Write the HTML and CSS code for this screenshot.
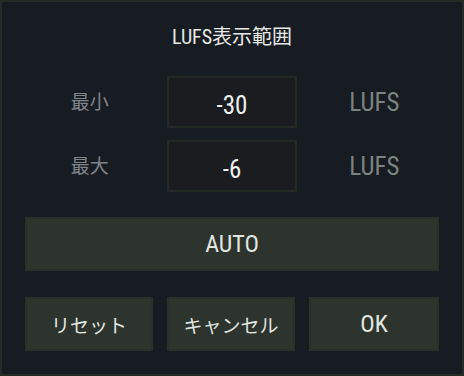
FILE: index.html
```html
<!DOCTYPE html>
<html lang="ja">
<head>
    <meta charset="UTF-8">
    <title>LUFS表示範囲</title>
    <link rel="stylesheet" href="styles.css">
</head>
<body>
    <div class="dialog">
        <div class="title">LUFS表示範囲</div>

        <div class="range-grid">
            <div class="label">最小</div>
            <div class="value-box">-30</div>
            <div class="unit">LUFS</div>

            <div class="label">最大</div>
            <div class="value-box">-6</div>
            <div class="unit">LUFS</div>
        </div>

        <button class="btn btn-auto">AUTO</button>

        <div class="actions">
            <button class="btn">リセット</button>
            <button class="btn">キャンセル</button>
            <button class="btn btn-ok">OK</button>
        </div>
    </div>
</body>
</html>
```

FILE: styles.css
```css
body {
    margin: 0;
    background-color: #171b22;
    font-family: "Roboto Condensed", Roboto, "Noto Sans CJK JP", sans-serif;
}
.dialog {
    width: 464px;
    height: 376px;
    box-sizing: border-box;
    border: 2px solid #252c27;
    background-color: #171b22;
    padding: 0 23px;
    display: flex;
    flex-direction: column;
}
.title {
    margin-top: 20px;
    height: 30px;
    line-height: 30px;
    text-align: center;
    color: #e6eae6;
    font-size: 20px;
    margin-bottom: 24px;
}
.range-grid {
    display: grid;
    grid-template-columns: 1fr 1fr 1fr;
    grid-auto-rows: 52px;
    column-gap: 13px;
    row-gap: 12px;
    align-items: center;
}
.label {
    text-align: center;
    color: #7f8488;
    font-size: 19px;
    margin-top: -4px;
}
.unit {
    text-align: center;
    color: #7b8480;
    font-size: 25px;
}
.value-box {
    height: 52px;
    box-sizing: border-box;
    border: 2px solid #232a25;
    background-color: #1a1c1f;
    color: #eef0ee;
    font-size: 25px;
    line-height: 50px;
    padding-top: 3px;
    text-align: center;
}
.btn {
    font-family: inherit;
    background-color: #2c342d;
    border: 2px solid #283029;
    color: #e2e6e0;
    font-size: 19px;
    height: 54px;
    padding: 0;
    cursor: pointer;
}
.btn-auto {
    margin-top: 25px;
    font-size: 24px;
}
.btn-ok {
    font-size: 24px;
}
.actions {
    margin-top: 26px;
    display: grid;
    grid-template-columns: 128px 128px 1fr;
    column-gap: 14px;
}
```
